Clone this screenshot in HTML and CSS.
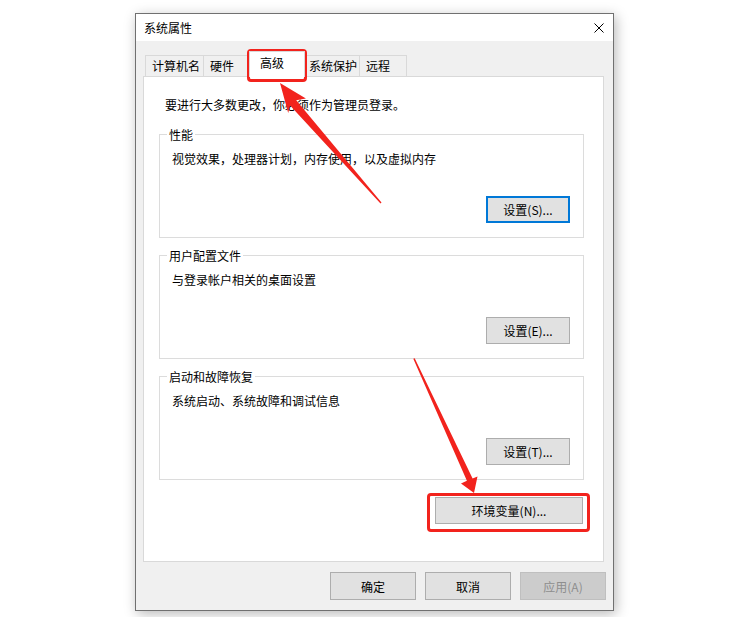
FILE: index.html
```html
<!DOCTYPE html>
<html lang="zh-CN">
<head>
    <meta charset="UTF-8">
    <meta name="viewport" content="width=device-width, initial-scale=1.0">
    <title>系统属性</title>
    <link rel="stylesheet" href="styles.css">
</head>
<body>
    <div class="window">
        <div class="titlebar">
            <span class="title">系统属性</span>
            <svg class="close" width="10" height="10" viewBox="0 0 10 10">
                <path d="M0.5 0.5 L9.5 9.5 M9.5 0.5 L0.5 9.5" stroke="#000" stroke-width="1" fill="none"/>
            </svg>
        </div>
        <div class="content">
            <div class="tabs">
                <div class="tab tab-name">计算机名</div>
                <div class="tab tab-hw">硬件</div>
                <div class="tab tab-adv active">高级</div>
                <div class="tab tab-prot">系统保护</div>
                <div class="tab tab-remote">远程</div>
            </div>
            <div class="panel">
                <p class="notice">要进行大多数更改，你必须作为管理员登录。</p>

                <fieldset class="group">
                    <legend>性能</legend>
                    <div class="group-body">
                        <p>视觉效果，处理器计划，内存使用，以及虚拟内存</p>
                        <button class="btn focused">设置(S)...</button>
                    </div>
                </fieldset>

                <fieldset class="group">
                    <legend>用户配置文件</legend>
                    <div class="group-body">
                        <p>与登录帐户相关的桌面设置</p>
                        <button class="btn">设置(E)...</button>
                    </div>
                </fieldset>

                <fieldset class="group">
                    <legend>启动和故障恢复</legend>
                    <div class="group-body">
                        <p>系统启动、系统故障和调试信息</p>
                        <button class="btn">设置(T)...</button>
                    </div>
                </fieldset>

                <div class="env-row">
                    <button class="btn btn-wide">环境变量(N)...</button>
                </div>
            </div>
        </div>
        <div class="footer">
            <button class="btn btn-dlg">确定</button>
            <button class="btn btn-dlg">取消</button>
            <button class="btn btn-dlg" disabled>应用(A)</button>
        </div>
    </div>

    <!-- red annotation frames and arrows -->
    <div class="mark mark-tab"></div>
    <div class="mark mark-env"></div>
    <svg class="arrows" width="751" height="617" viewBox="0 0 751 617">
        <polygon fill="#f2231d" points="280,83 305.9,98.6 296.2,100.2 381.5,202.5 380.5,203.5 290.1,105.4 288.2,112.9"/>
        <polygon fill="#f2231d" points="474,493 477.5,476.5 472.6,478.4 414.7,358.3 413.3,358.8 466.9,480.8 461.0,483.4"/>
    </svg>
</body>
</html>
```

FILE: styles.css
```css
html, body {
    margin: 0;
    padding: 0;
}

body {
    width: 751px;
    height: 617px;
    background: #ffffff;
    font-family: "Noto Sans CJK SC", "Microsoft YaHei", sans-serif;
    font-size: 12px;
    line-height: 17px;
    color: #000;
    position: relative;
    overflow: hidden;
}

p {
    margin: 0;
}

/* dialog frame */
.window {
    margin: 13px 0 0 135px;
    width: 479px;
    height: 598px;
    box-sizing: border-box;
    border: 1px solid #707070;
    background: #f0f0f0;
    box-shadow: 2px 3px 12px rgba(0, 0, 0, 0.28);
    display: flex;
    flex-direction: column;
}

.titlebar {
    height: 27px;
    background: #ffffff;
    display: flex;
    align-items: center;
    justify-content: space-between;
    padding: 0 9px 0 8px;
}

.close {
    display: block;
}

.content {
    padding: 10px 9px 0 7px;
}

/* tab strip */
.tabs {
    display: flex;
    align-items: flex-end;
    padding-left: 2px;
}

.tab {
    box-sizing: border-box;
    height: 21px;
    padding: 1px 0 0 6px;
    border: 1px solid #d9d9d9;
    border-bottom: none;
    border-left: none;
    background: #f0f0f0;
    white-space: nowrap;
}

.tab-name { width: 59px; border-left: 1px solid #d9d9d9; }
.tab-hw { width: 47px; }
.tab-adv { width: 52px; }
.tab-prot { width: 57px; }
.tab-remote { width: 47px; }

.tab.active {
    position: relative;
    z-index: 1;
    height: 26px;
    width: 56px;
    margin: 0 -2px -1px -2px;
    padding: 2px 0 0 10px;
    border-left: 1px solid #d9d9d9;
    background: #ffffff;
}

.panel {
    box-sizing: border-box;
    height: 486px;
    border: 1px solid #d9d9d9;
    background: #ffffff;
    padding: 19px 19px 0 15px;
}

.notice {
    padding-left: 6px;
    margin-bottom: 13px;
}

/* group boxes */
.group {
    margin: 0 0 9px 0;
    border: 1px solid #dcdcdc;
    padding: 7px 13px 14px 12px;
}

.group legend {
    padding: 0 2px;
    margin-left: -5px;
}

.group-body {
    height: 73px;
    display: flex;
    flex-direction: column;
    justify-content: space-between;
}

.group-body .btn {
    align-self: flex-end;
}

.env-row {
    display: flex;
    justify-content: flex-end;
    margin: 17px 1px 0 0;
}

/* push buttons */
.btn {
    box-sizing: border-box;
    width: 84px;
    height: 27px;
    margin: 0;
    padding: 0;
    border: 1px solid #adadad;
    background: #e1e1e1;
    font-family: inherit;
    font-size: 12px;
    color: #000;
}

.btn.focused {
    border: 2px solid #0078d7;
}

.btn-wide {
    width: 148px;
}

.footer {
    display: flex;
    justify-content: flex-end;
    gap: 9px;
    padding: 10px 7px 0 0;
}

.btn-dlg {
    width: 86px;
    height: 28px;
}

.btn:disabled {
    background: #cccccc;
    border-color: #bfbfbf;
    color: #8e8e8e;
}

/* annotations */
.mark {
    position: absolute;
    box-sizing: border-box;
    border: 3px solid #f2231d;
    border-radius: 4px;
}

.mark-tab {
    left: 247px;
    top: 49px;
    width: 60px;
    height: 33px;
}

.mark-env {
    left: 427px;
    top: 493px;
    width: 163px;
    height: 39px;
}

.arrows {
    position: absolute;
    left: 0;
    top: 0;
    pointer-events: none;
}
```
